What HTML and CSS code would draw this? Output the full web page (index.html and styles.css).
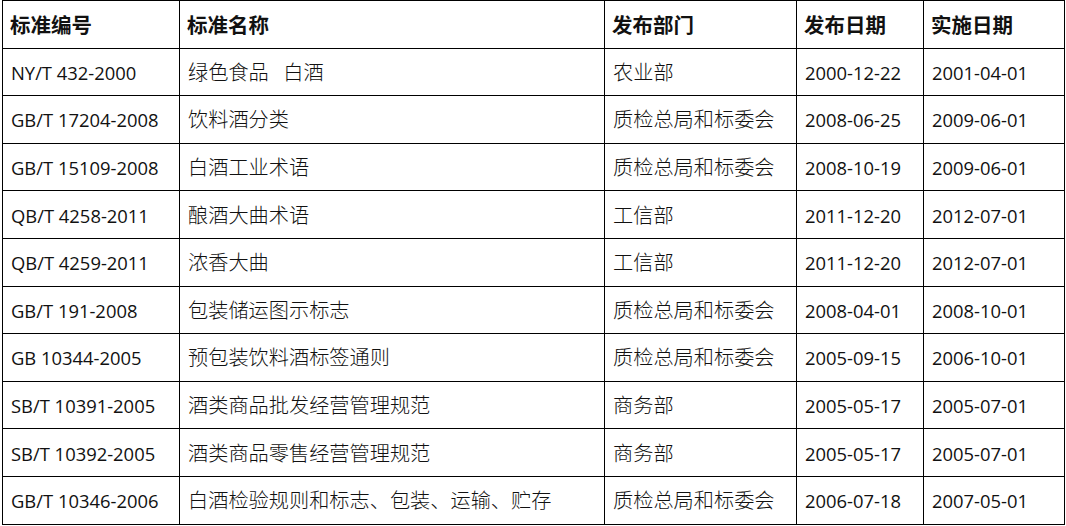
FILE: index.html
```html
<!DOCTYPE html>
<html lang="zh">
<head>
<meta charset="utf-8">
<link rel="stylesheet" href="styles.css">
</head>
<body>
<table class="std">
  <colgroup>
    <col class="c1"><col class="c2"><col class="c3"><col class="c4"><col class="c5">
  </colgroup>
  <thead>
    <tr><th>标准编号</th><th>标准名称</th><th>发布部门</th><th>发布日期</th><th>实施日期</th></tr>
  </thead>
  <tbody>
    <tr><td class="num">NY/T 432-2000</td><td class="cn">绿色食品&ensp; 白酒</td><td class="cn">农业部</td><td class="num">2000-12-22</td><td class="num">2001-04-01</td></tr>
    <tr><td class="num">GB/T 17204-2008</td><td class="cn">饮料酒分类</td><td class="cn">质检总局和标委会</td><td class="num">2008-06-25</td><td class="num">2009-06-01</td></tr>
    <tr><td class="num">GB/T 15109-2008</td><td class="cn">白酒工业术语</td><td class="cn">质检总局和标委会</td><td class="num">2008-10-19</td><td class="num">2009-06-01</td></tr>
    <tr><td class="num">QB/T 4258-2011</td><td class="cn">酿酒大曲术语</td><td class="cn">工信部</td><td class="num">2011-12-20</td><td class="num">2012-07-01</td></tr>
    <tr><td class="num">QB/T 4259-2011</td><td class="cn">浓香大曲</td><td class="cn">工信部</td><td class="num">2011-12-20</td><td class="num">2012-07-01</td></tr>
    <tr><td class="num">GB/T 191-2008</td><td class="cn">包装储运图示标志</td><td class="cn">质检总局和标委会</td><td class="num">2008-04-01</td><td class="num">2008-10-01</td></tr>
    <tr><td class="num">GB 10344-2005</td><td class="cn">预包装饮料酒标签通则</td><td class="cn">质检总局和标委会</td><td class="num">2005-09-15</td><td class="num">2006-10-01</td></tr>
    <tr><td class="num">SB/T 10391-2005</td><td class="cn">酒类商品批发经营管理规范</td><td class="cn">商务部</td><td class="num">2005-05-17</td><td class="num">2005-07-01</td></tr>
    <tr><td class="num">SB/T 10392-2005</td><td class="cn">酒类商品零售经营管理规范</td><td class="cn">商务部</td><td class="num">2005-05-17</td><td class="num">2005-07-01</td></tr>
    <tr><td class="num">GB/T 10346-2006</td><td class="cn">白酒检验规则和标志、包装、运输、贮存</td><td class="cn">质检总局和标委会</td><td class="num">2006-07-18</td><td class="num">2007-05-01</td></tr>
  </tbody>
</table>
</body>
</html>
```
FILE: styles.css
```css
html, body {
  margin: 0;
  padding: 0;
  background: #fff;
}
body {
  padding: 0 0 0 2px;
}
.std {
  border-collapse: collapse;
  table-layout: fixed;
  width: 1062px;
  color: #111;
}
.c1 { width: 177px; }
.c2 { width: 425px; }
.c3 { width: 192px; }
.c4 { width: 127px; }
.c5 { width: 141px; }
.std th, .std td {
  box-sizing: border-box;
  border: 1px solid #000;
  height: 47.6px;
  padding: 0 0 0 8px;
  line-height: 24px;
  text-align: left;
  vertical-align: middle;
  white-space: pre;
  overflow: hidden;
}
.std th {
  font-family: "Noto Sans CJK SC", sans-serif;
  font-weight: 700;
  font-size: 20.5px;
  padding-left: 7px;
}
.std td.num {
  font-family: "Open Sans", "Noto Sans CJK SC", sans-serif;
  font-size: 18.4px;
  padding-top: 2px;
}
.std td.cn {
  font-family: "Noto Sans CJK SC", sans-serif;
  font-weight: 300;
  font-size: 20.2px;
}
```
